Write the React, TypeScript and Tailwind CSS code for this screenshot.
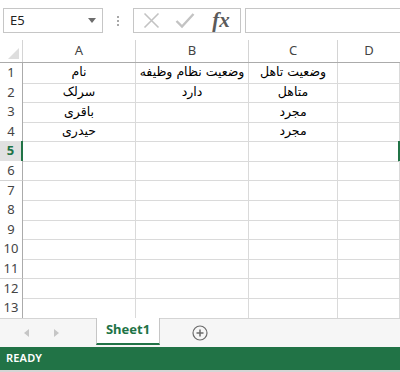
const cols = ['A', 'B', 'C', 'D'];

const data: Record<number, string[]> = {
  1: ['نام', 'وضعیت نظام وظیفه', 'وضعیت تاهل', ''],
  2: ['سرلک', 'دارد', 'متاهل', ''],
  3: ['باقری', '', 'مجرد', ''],
  4: ['حیدری', '', 'مجرد', ''],
};

const gridCols = 'grid grid-cols-[23px_113px_113px_89px_62px]';

const FormulaBar = () => (
  <div className="flex items-center h-[40px] pt-[1px] pl-[3px]">
    {/* Name box */}
    <div className="flex items-center justify-between w-[100px] h-[25px] border border-[#c6c6c6] bg-white px-[6px]">
      <span className="text-[13px] text-[#222]">E5</span>
      <svg width="8" height="5" viewBox="0 0 8 5">
        <path d="M0 0H8L4 5Z" fill="#6d6d6d" />
      </svg>
    </div>
    {/* Grip dots */}
    <div className="w-[30px] flex flex-col items-center gap-[2px]">
      <span className="w-[2px] h-[2px] bg-[#a8a8a8]" />
      <span className="w-[2px] h-[2px] bg-[#a8a8a8]" />
      <span className="w-[2px] h-[2px] bg-[#a8a8a8]" />
    </div>
    {/* Cancel / enter / fx */}
    <div className="flex items-center w-[108px] h-[25px] border border-[#c6c6c6] bg-white">
      <div className="w-[34px] flex justify-center">
        <svg width="17" height="17" viewBox="0 0 17 17">
          <path d="M1.5 1.5L15.5 15.5M15.5 1.5L1.5 15.5" stroke="#c3c3c3" strokeWidth="1.6" />
        </svg>
      </div>
      <div className="w-[34px] flex justify-center">
        <svg width="20" height="17" viewBox="0 0 20 17">
          <path d="M1.5 9L7 14.5L18.5 2" stroke="#c3c3c3" strokeWidth="2.4" fill="none" />
        </svg>
      </div>
      <div className="flex-1 flex justify-center">
        <span className="text-[21px] leading-none italic font-bold text-[#5a5a5a] font-['Liberation_Serif',serif]">fx</span>
      </div>
    </div>
    {/* Formula input */}
    <div className="ml-[4px] flex-1 h-[25px] border border-r-0 border-[#c6c6c6] bg-white" />
  </div>
);

const ColumnHeader = () => (
  <div className={`${gridCols} h-[23px] border-b border-[#ababab] bg-white`}>
    <div className="relative border-r border-[#d4d4d4]">
      <svg className="absolute right-[3px] bottom-[3px]" width="11" height="11" viewBox="0 0 11 11">
        <path d="M11 0V11H0Z" fill="#dedede" />
      </svg>
    </div>
    {cols.map((c) => (
      <div
        key={c}
        className="flex items-center justify-center border-r border-[#d4d4d4] text-[13px] text-[#444] last:border-r-0"
      >
        {c}
      </div>
    ))}
  </div>
);

const Row = ({ n }: { n: number }) => {
  const selected = n === 5;
  const cells = data[n] ?? ['', '', '', ''];
  return (
    <div className={`${gridCols} h-[19.6px]`}>
      <div
        className={`flex items-center justify-center border-b border-[#d4d4d4] text-[13px] ${
          selected
            ? 'bg-[#e1e1e1] text-[#217346] font-bold border-r-2 border-r-[#217346]'
            : 'bg-white text-[#444] border-r border-r-[#ababab]'
        }`}
      >
        {n}
      </div>
      {cells.map((t, i) => (
        <div
          key={i}
          dir="rtl"
          className={`flex items-center justify-center border-b border-[#dadada] text-[12.5px] text-black whitespace-nowrap font-['DejaVu_Sans',sans-serif] ${
            i === 3 && selected ? 'border-r-2 border-r-[#217346]' : 'border-r border-r-[#dadada]'
          }`}
        >
          {t}
        </div>
      ))}
    </div>
  );
};

const SheetTabs = () => (
  <div className="flex items-stretch h-[29px] bg-[#f6f6f6] border-t border-[#d4d4d4]">
    <div className="w-[96px] flex items-center pl-[24px] gap-[25px]">
      <svg width="5" height="8" viewBox="0 0 5 8">
        <path d="M5 0V8L0 4Z" fill="#c6c6c6" />
      </svg>
      <svg width="5" height="8" viewBox="0 0 5 8">
        <path d="M0 0V8L5 4Z" fill="#c6c6c6" />
      </svg>
    </div>
    <div className="w-[64px] -mt-[1px] flex items-center justify-center bg-white border-x border-[#c6c6c6] border-b-2 border-b-[#217346] mb-[2px]">
      <span className="text-[13px] font-bold text-[#217346]">Sheet1</span>
    </div>
    <div className="w-[80px] flex items-center justify-center">
      <svg width="16" height="16" viewBox="0 0 16 16">
        <circle cx="8" cy="8" r="7" stroke="#6b6b6b" strokeWidth="1.2" fill="none" />
        <path d="M8 4.5V11.5M4.5 8H11.5" stroke="#6b6b6b" strokeWidth="1.5" />
      </svg>
    </div>
  </div>
);

const StatusBar = () => (
  <div className="h-[25px] bg-[#217346] border-b-2 border-[#d6d6d6] flex items-center pl-[6px]">
    <span className="text-[11px] font-semibold text-white tracking-[0.2px]">READY</span>
  </div>
);

export default function App() {
  return (
    <div className="w-[400px] h-[372px] overflow-hidden bg-white flex flex-col font-['Noto_Sans','Open_Sans',sans-serif]">
      <FormulaBar />
      <ColumnHeader />
      <div className="flex flex-col">
        {Array.from({ length: 13 }, (_, i) => (
          <Row key={i} n={i + 1} />
        ))}
      </div>
      <SheetTabs />
      <StatusBar />
    </div>
  );
}
